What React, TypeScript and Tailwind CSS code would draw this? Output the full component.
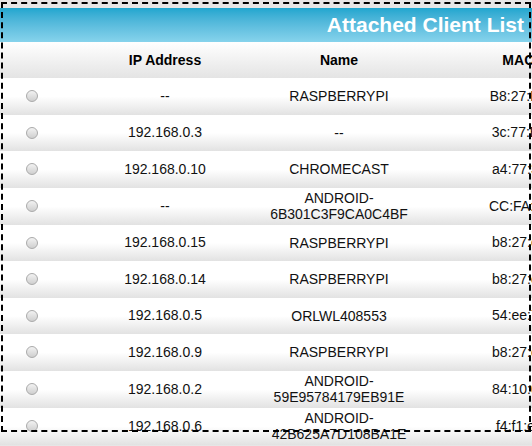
import React from 'react';

const rows: [string, string, string][] = [
  ['--', 'RASPBERRYPI', 'B8:27:EB:11:22:33'],
  ['192.168.0.3', '--', '3c:77:E6:11:22:33'],
  ['192.168.0.10', 'CHROMECAST', 'a4:77:33:11:22:33'],
  ['--', 'ANDROID-\n6B301C3F9CA0C4BF', 'CC:FA:00:11:22:33'],
  ['192.168.0.15', 'RASPBERRYPI', 'b8:27:eb:11:22:33'],
  ['192.168.0.14', 'RASPBERRYPI', 'b8:27:eb:11:22:34'],
  ['192.168.0.5', 'ORLWL408553', '54:ee:75:11:22:33'],
  ['192.168.0.9', 'RASPBERRYPI', 'b8:27:eb:11:22:35'],
  ['192.168.0.2', 'ANDROID-\n59E95784179EB91E', '84:10:0d:11:22:33'],
  ['192.168.0.6', 'ANDROID-\n42B625A7D108BA1E', 'f4:f1:e1:11:22:33'],
];

export default function App() {
  return (
    <div className="relative w-[532px] h-[446px] overflow-hidden bg-[#e6e6e6] pt-2" style={{ fontFamily: '"Liberation Sans", Arial, sans-serif' }}>
      <div className="w-[700px]">
        <div className="h-[34px] bg-gradient-to-b from-[#1ea6cf] to-[#86d3ec] flex items-center w-[532px] justify-end pr-2">
          <span className="text-white font-bold text-[21px]">Attached Client List</span>
        </div>
        <div className="flex h-[36px] items-center bg-gradient-to-b from-white to-[#e4e4e4] font-bold text-[14px] text-black">
          <div className="w-[60px]" />
          <div className="w-[210px] text-center">IP Address</div>
          <div className="w-[138px] text-center">Name</div>
          <div className="w-[280px] text-center">MAC Address</div>
        </div>
        {rows.map(([ip, name, mac], i) => {
          const tall = name.includes('\n');
          return (
            <div key={i} className={`flex items-center bg-gradient-to-b from-white via-white to-[#e2e2e2] text-[14px] text-[#111] ${tall ? 'h-[37px]' : 'h-[36.5px]'}`}>
              <div className="w-[60px] flex justify-center pl-[4px]">
                <span className="w-[12px] h-[12px] rounded-full border border-[#aaa] bg-gradient-to-b from-[#f2f2f2] to-[#cfcfcf]" />
              </div>
              <div className="w-[210px] text-center">{ip}</div>
              <div className="w-[138px] text-center whitespace-pre leading-[16px]">{name}</div>
              <div className="w-[280px] text-center">{mac}</div>
            </div>
          );
        })}
      </div>
      <div className="absolute left-[1px] top-[2px] w-[530px] h-[430px] border-2 border-dashed border-black pointer-events-none" />
    </div>
  );
}
